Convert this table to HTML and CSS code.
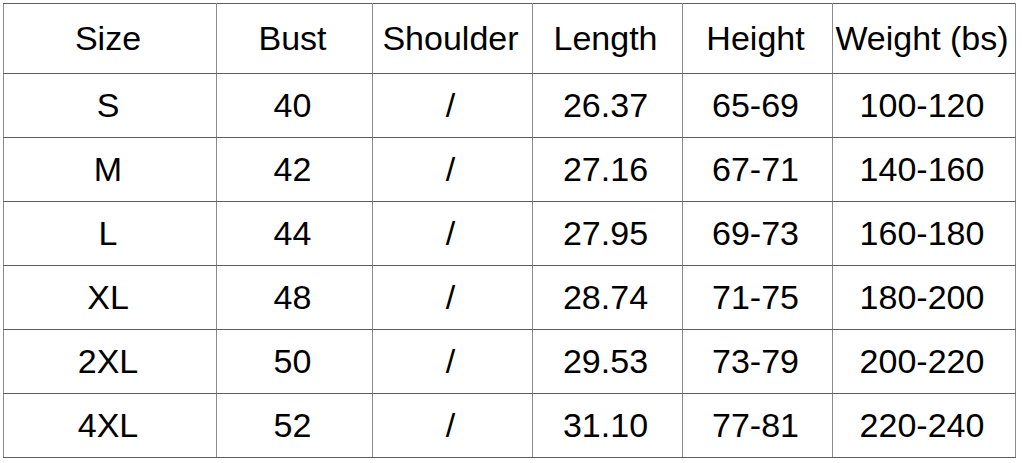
FILE: index.html
```html
<!DOCTYPE html>
<html>
<head>
<meta charset="utf-8">
<link rel="stylesheet" href="styles.css">
</head>
<body>
<table class="size-table">
  <colgroup>
    <col class="c1"><col class="c2"><col class="c3"><col class="c4"><col class="c5"><col class="c6">
  </colgroup>
  <thead>
    <tr class="head"><th>Size</th><th>Bust</th><th>Shoulder</th><th>Length</th><th>Height</th><th>Weight (bs)</th></tr>
  </thead>
  <tbody>
    <tr><td>S</td><td>40</td><td>/</td><td>26.37</td><td>65-69</td><td>100-120</td></tr>
    <tr><td>M</td><td>42</td><td>/</td><td>27.16</td><td>67-71</td><td>140-160</td></tr>
    <tr><td>L</td><td>44</td><td>/</td><td>27.95</td><td>69-73</td><td>160-180</td></tr>
    <tr><td>XL</td><td>48</td><td>/</td><td>28.74</td><td>71-75</td><td>180-200</td></tr>
    <tr><td>2XL</td><td>50</td><td>/</td><td>29.53</td><td>73-79</td><td>200-220</td></tr>
    <tr><td>4XL</td><td>52</td><td>/</td><td>31.10</td><td>77-81</td><td>220-240</td></tr>
  </tbody>
</table>
</body>
</html>
```

FILE: styles.css
```css
html, body {
  margin: 0;
  padding: 0;
  background: #ffffff;
}
body {
  padding: 3px;
}
.size-table {
  border-collapse: collapse;
  table-layout: fixed;
  width: 1012px;
  font-family: "Liberation Sans", Arial, sans-serif;
  font-size: 34px;
  color: #000;
}
.c1 { width: 213px; }
.c2 { width: 156px; }
.c3 { width: 160px; }
.c4 { width: 150px; }
.c5 { width: 150px; }
.c6 { width: 183px; }
.size-table th,
.size-table td {
  font-weight: normal;
  text-align: center;
  vertical-align: middle;
  padding: 0 4px 0 0;
  white-space: nowrap;
  height: 63px;
  border-top: 1.5px solid #5e5e5e;
  border-bottom: 1.5px solid #5e5e5e;
  border-left: 1.5px solid #8c8c8c;
  border-right: 1.5px solid #8c8c8c;
}
.size-table .head th {
  height: 69px;
}
```
